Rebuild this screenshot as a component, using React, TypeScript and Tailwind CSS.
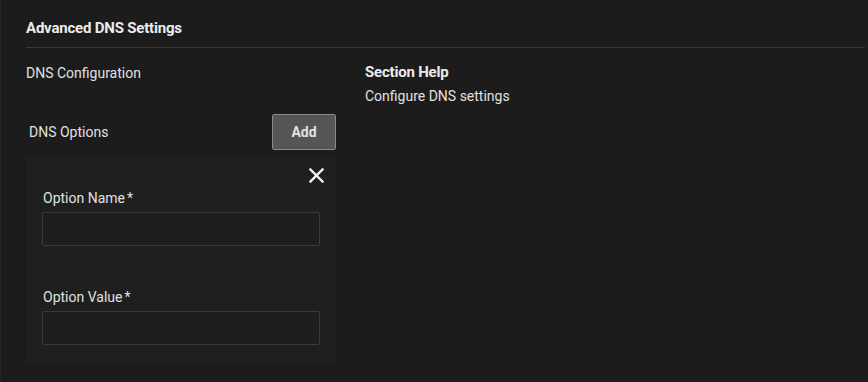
import React from 'react';

const Field: React.FC<{ label: string; className?: string }> = ({ label, className }) => (
  <div className={className}>
    <label className="block pl-px text-[14px] leading-5 text-[#e0e0e0]">
      {label}
      <span className="ml-[2px]">*</span>
    </label>
    <input
      type="text"
      className="mt-1 block h-[34px] w-full rounded-[2px] border border-[#3b3b3b] bg-[#1e1e1e] px-2 text-[14px] text-[#e0e0e0] outline-none"
    />
  </div>
);

const App: React.FC = () => {
  return (
    <div
      className="h-[382px] w-[868px] overflow-hidden border-l border-[#262626] bg-[#1c1c1c] pl-[25px] pr-[3px]"
      style={{ fontFamily: 'Roboto, "Noto Sans", sans-serif' }}
    >
      {/* Header */}
      <div className="border-b border-[#393939] pt-[18px] pb-[9px]">
        <h2 className="text-[15px] font-bold leading-5 tracking-[-0.2px] text-[#ececec]">Advanced DNS Settings</h2>
      </div>

      <div className="flex gap-[29px]">
        {/* Left column */}
        <div className="w-[310px] shrink-0">
          <div className="pt-[15px] text-[14px] leading-5 text-[#e0e0e0]">DNS Configuration</div>

          <div className="mt-[31px] flex items-center justify-between">
            <span className="pl-[3px] text-[14px] leading-5 text-[#e0e0e0]">DNS Options</span>
            <button className="h-9 w-16 rounded-[2px] border border-[#8a8a8a] bg-[#555555] text-[14px] font-bold text-[#e2e2e2]">
              Add
            </button>
          </div>

          {/* Option card */}
          <div className="mt-[5px] bg-[#1f1f1f] px-4 pt-[13px] pb-5">
            <div className="flex justify-end">
              <svg width="15" height="15" viewBox="0 0 15 15" className="mr-[-4px]">
                <path d="M1.5 1.5 L13.5 13.5 M13.5 1.5 L1.5 13.5" stroke="#f2f2f2" strokeWidth="2.4" strokeLinecap="square" />
              </svg>
            </div>
            <Field label="Option Name" className="mt-[5px]" />
            <Field label="Option Value" className="mt-[41px]" />
          </div>
        </div>

        {/* Right column */}
        <div className="pt-[14px]">
          <h3 className="text-[15px] font-bold leading-5 tracking-[-0.2px] text-[#ececec]">Section Help</h3>
          <p className="mt-1 text-[14px] leading-5 text-[#e0e0e0]">Configure DNS settings</p>
        </div>
      </div>
    </div>
  );
};

export default App;
